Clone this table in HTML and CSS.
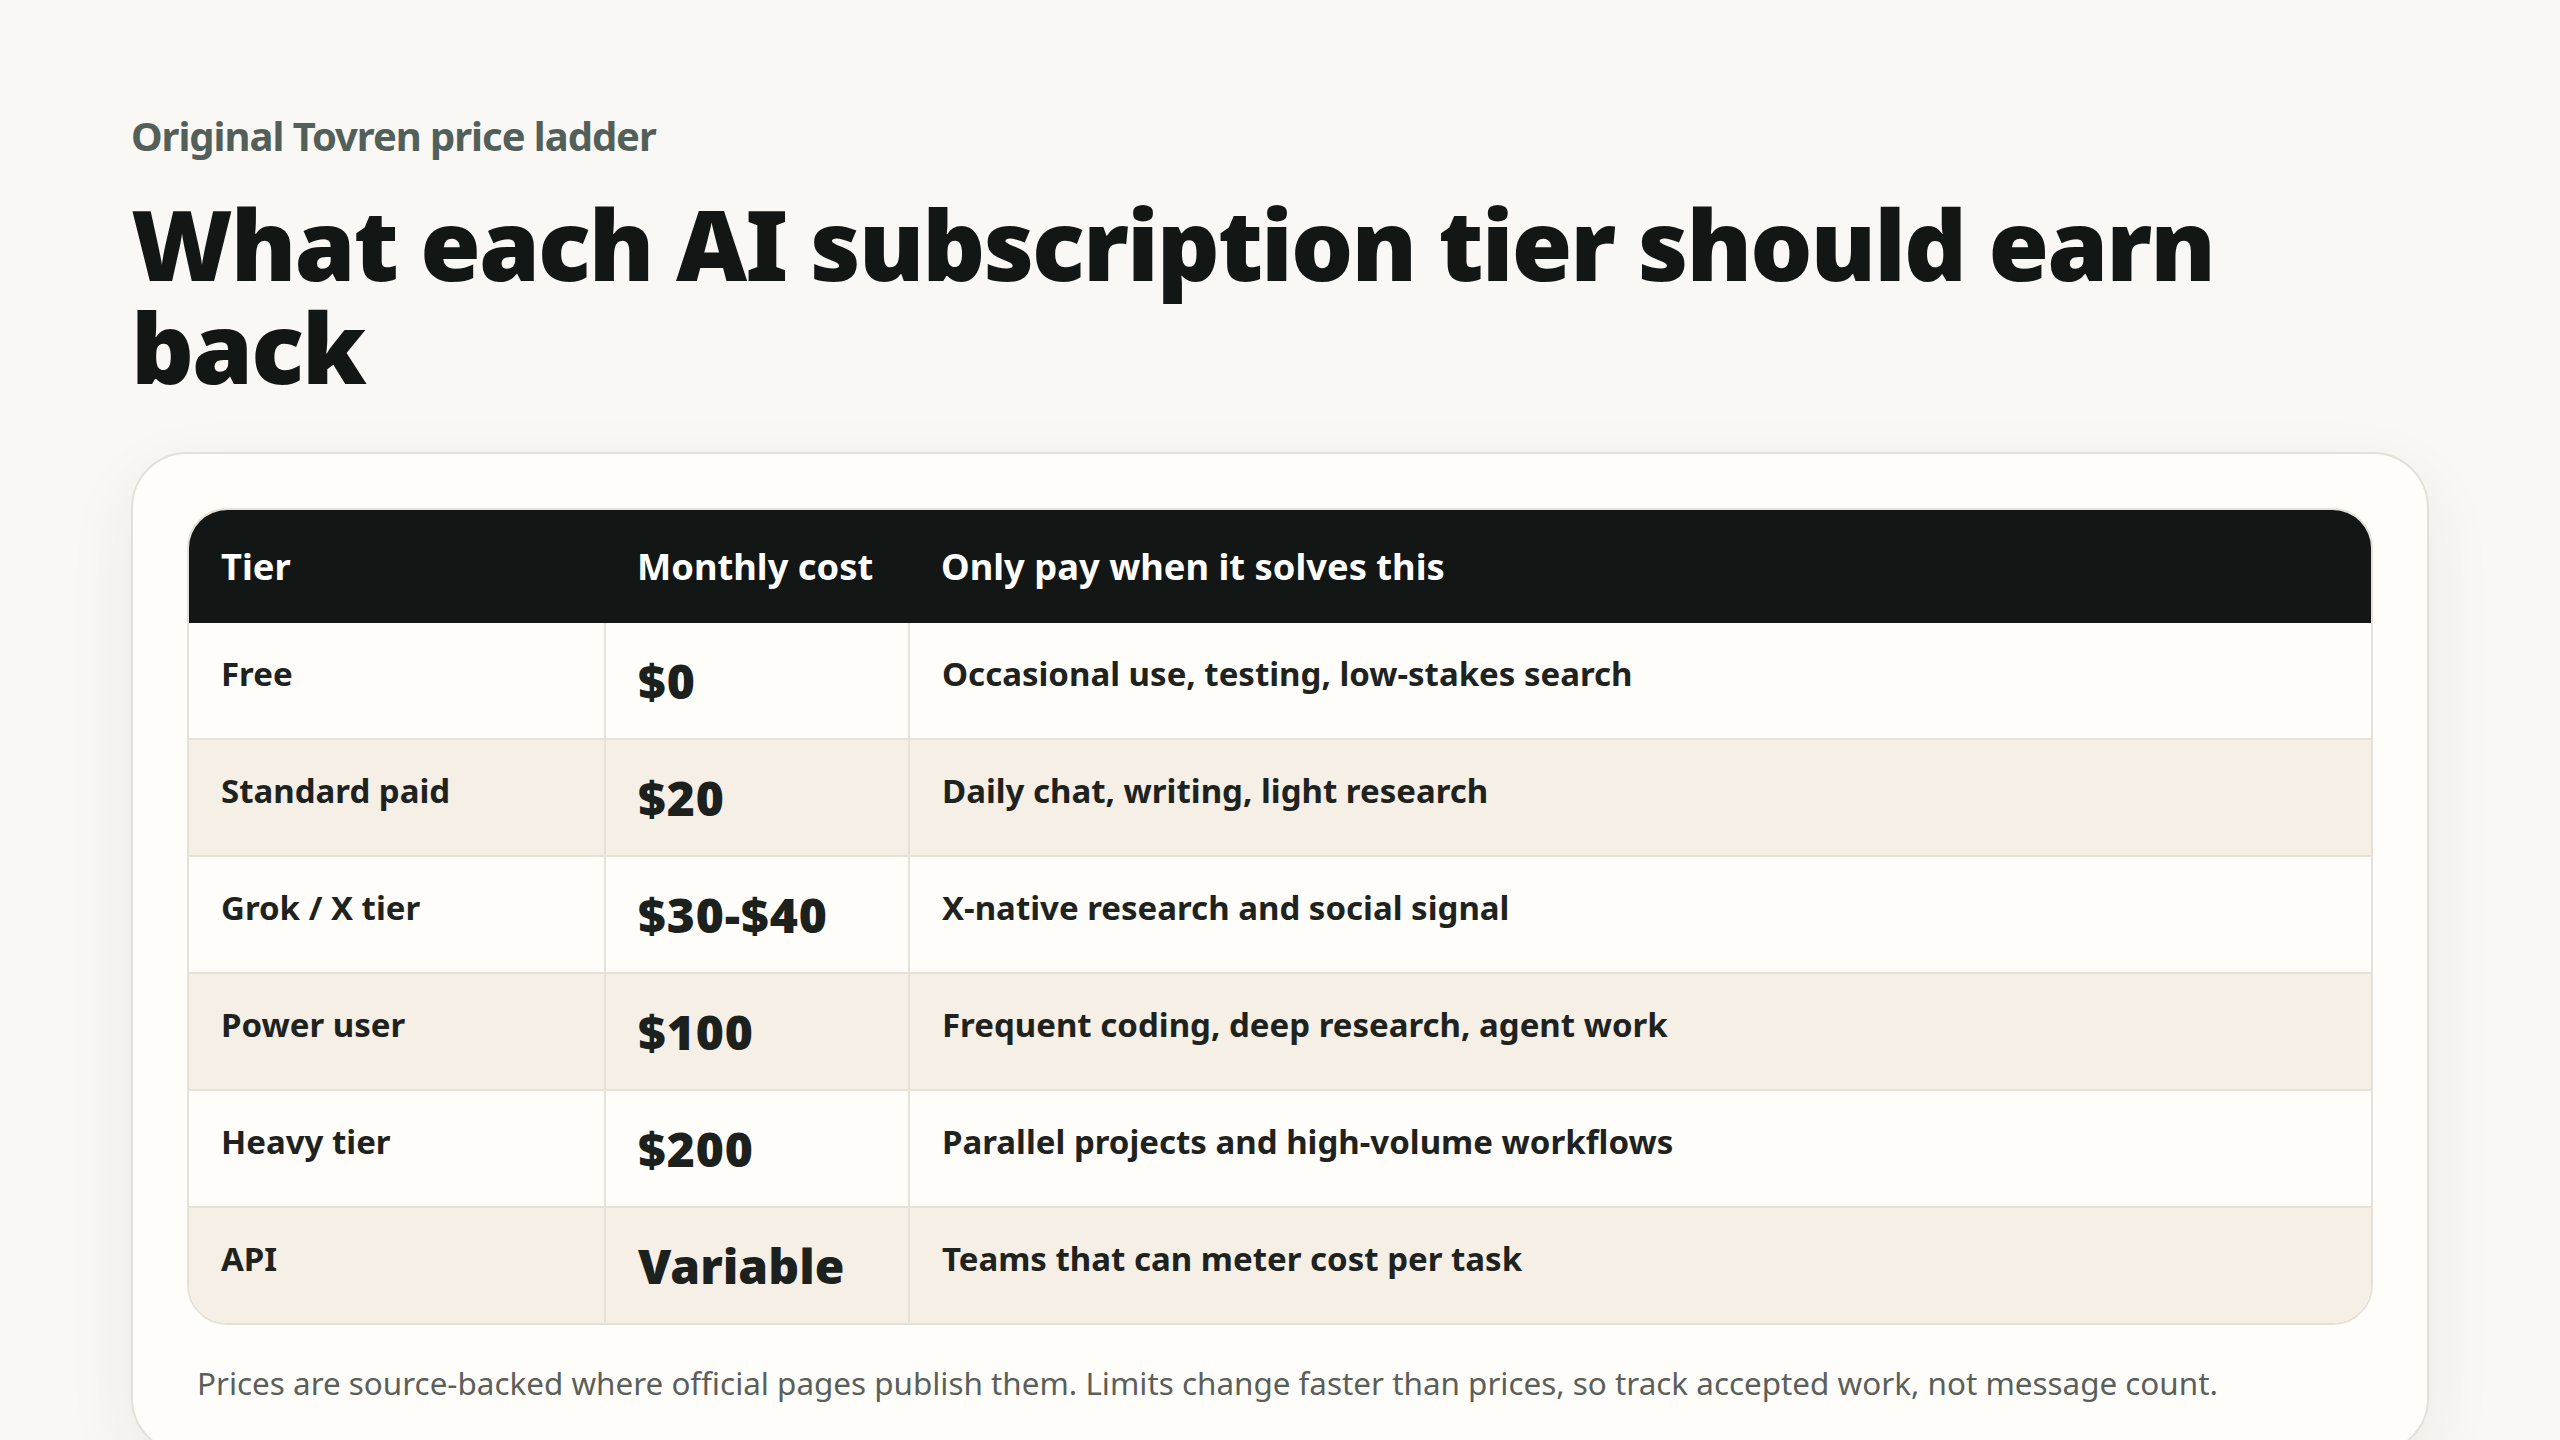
FILE: index.html
```html
<!DOCTYPE html>
<html lang="en">
<head>
<meta charset="utf-8">
<title>What each AI subscription tier should earn back</title>
<link rel="stylesheet" href="styles.css">
</head>
<body>
<main class="page">
  <p class="eyebrow">Original Tovren price ladder</p>
  <h1 class="title">What each AI subscription tier should earn back</h1>
  <section class="card">
    <div class="table-wrap">
      <table class="ladder">
        <thead>
          <tr>
            <th class="col-tier">Tier</th>
            <th class="col-cost">Monthly cost</th>
            <th class="col-use">Only pay when it solves this</th>
          </tr>
        </thead>
        <tbody>
          <tr>
            <td class="tier">Free</td>
            <td class="cost">$0</td>
            <td class="use">Occasional use, testing, low-stakes search</td>
          </tr>
          <tr>
            <td class="tier">Standard paid</td>
            <td class="cost">$20</td>
            <td class="use">Daily chat, writing, light research</td>
          </tr>
          <tr>
            <td class="tier">Grok / X tier</td>
            <td class="cost">$30-$40</td>
            <td class="use">X-native research and social signal</td>
          </tr>
          <tr>
            <td class="tier">Power user</td>
            <td class="cost">$100</td>
            <td class="use">Frequent coding, deep research, agent work</td>
          </tr>
          <tr>
            <td class="tier">Heavy tier</td>
            <td class="cost">$200</td>
            <td class="use">Parallel projects and high-volume workflows</td>
          </tr>
          <tr>
            <td class="tier">API</td>
            <td class="cost word">Variable</td>
            <td class="use">Teams that can meter cost per task</td>
          </tr>
        </tbody>
      </table>
    </div>
    <p class="note">Prices are source-backed where official pages publish them. Limits change faster than prices, so track accepted work, not message count.</p>
  </section>
</main>
</body>
</html>
```

FILE: styles.css
```css
* { box-sizing: border-box; }

html, body {
  margin: 0;
  padding: 0;
  background: #f9f8f5;
}

body {
  font-family: "Noto Sans", "Open Sans", sans-serif;
  color: #1f231f;
}

.page {
  max-width: 2298px;
  margin: 0 auto;
  padding-top: 112px;
}

.eyebrow {
  margin: 0;
  font-size: 40px;
  line-height: 48px;
  font-weight: 700;
  letter-spacing: -0.026em;
  color: #53605a;
}

.title {
  margin: 32px 0 0;
  font-size: 98px;
  line-height: 103px;
  font-weight: 900;
  color: #121614;
  letter-spacing: -0.02em;
}

.card {
  margin-top: 54px;
  background: #fefdf9;
  border: 2px solid #e4e0d7;
  border-radius: 56px;
  padding: 54px 54px 47px;
  box-shadow: 0 24px 70px rgba(40, 36, 28, 0.07);
}

.table-wrap {
  border: 2px solid #e6e1d8;
  border-radius: 40px;
  overflow: hidden;
}

.ladder {
  width: 100%;
  border-collapse: collapse;
  table-layout: fixed;
}

.col-tier { width: 416px; }
.col-cost { width: 304px; }

.ladder th {
  background: #121614;
  color: #ffffff;
  text-align: left;
  font-size: 36.3px;
  font-weight: 700;
  line-height: 49px;
  padding: 32px 32px;
}

.ladder td {
  vertical-align: top;
  padding: 26px 32px;
  font-size: 33px;
  font-weight: 700;
  line-height: 50px;
  color: #1f231f;
  border-right: 2px solid #e7e2d9;
  border-bottom: 2px solid #e7e2d9;
}

.ladder td:last-child { border-right: none; }
.ladder tbody tr:last-child td { border-bottom: none; }

.ladder tbody tr:nth-child(even) td { background: #f5efe6; }
.ladder tbody tr:nth-child(odd) td { background: #fefdf9; }

.ladder td.cost {
  font-size: 48px;
  line-height: 63px;
  font-weight: 900;
  letter-spacing: 0.02em;
  color: #1c211d;
}

.ladder td.cost.word { letter-spacing: 0; }

.note {
  margin: 36px 0 0 10px;
  font-size: 31.4px;
  line-height: 44px;
  font-weight: 400;
  color: #5a5f5b;
}
```
